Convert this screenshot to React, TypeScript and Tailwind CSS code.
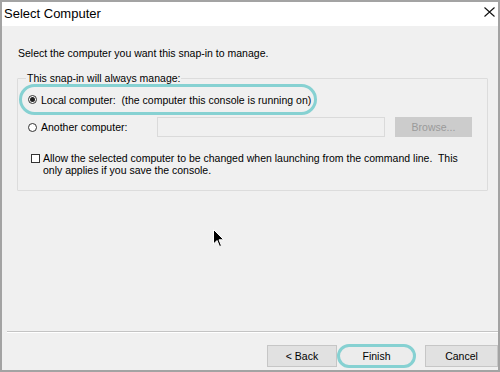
export default function App() {
  return (
    <div className="w-[500px] h-[372px] flex flex-col border-2 border-[#a3a3a3] bg-[#f0f0f0] text-black font-['Liberation_Sans',Arial,sans-serif]">
      {/* Title bar */}
      <div className="h-[24px] shrink-0 bg-white flex items-center justify-between pl-[2px] pr-[2px]">
        <span className="text-[13px] leading-none mt-[-2px]">Select Computer</span>
        <svg width="11" height="10" viewBox="0 0 11 10" className="mt-[-4px] mr-[1px]">
          <path d="M0.5 0.5L10.5 9.5M10.5 0.5L0.5 9.5" stroke="#111" strokeWidth="1.1" />
        </svg>
      </div>

      {/* Body */}
      <div className="relative flex-1 flex flex-col text-[10.5px] leading-[12px]">
        <p className="mt-[21px] ml-[16px]">Select the computer you want this snap-in to manage.</p>

        <fieldset className="mt-[13px] ml-[15px] w-[471px] h-[119px] border border-[#dcdcdc] rounded-[1px]">
          <legend className="ml-[8px] px-[1px]">This snap-in will always manage:</legend>

          <div className="ml-[1px] w-[298px] h-[31px] rounded-full border-[3px] border-[#86d1d2] flex items-center pl-[6px] gap-[4px] whitespace-nowrap">
            <span className="w-[9px] h-[9px] shrink-0 rounded-full border border-[#333] bg-white flex items-center justify-center">
              <span className="w-[5px] h-[5px] rounded-full bg-[#222]" />
            </span>
            <span>Local computer:&nbsp; (the computer this console is running on)</span>
          </div>

          <div className="mt-[2px] flex items-center h-[20px]">
            <div className="ml-[10px] flex items-center gap-[4px] w-[129px]">
              <span className="w-[9px] h-[9px] rounded-full border border-[#333] bg-white" />
              <span>Another computer:</span>
            </div>
            <div className="w-[228px] h-[20px] border border-[#dadada] bg-[#f0f0f0]" />
            <div className="ml-[10px] w-[77px] h-[20px] bg-[#cccccc] text-[#9a9a9a] flex items-center justify-center">
              Browse...
            </div>
          </div>

          <div className="mt-[15px] ml-[13px] flex items-start gap-[3px]">
            <span className="mt-[2px] w-[9px] h-[9px] shrink-0 border border-[#333] bg-white" />
            <span className="whitespace-nowrap">
              Allow the selected computer to be changed when launching from the command line.&nbsp; This
              <br />
              only applies if you save the console.
            </span>
          </div>
        </fieldset>

        {/* Footer */}
        <div className="mt-auto ml-[5px] border-t border-[#c4c4c4] shadow-[0_1px_0_#ffffff]" />
        <div className="mt-[13px] mb-[3px] flex justify-end h-[22px]">
          <button className="w-[70px] h-[22px] bg-[#e1e1e1] border border-[#c6c6c6] text-[10.5px]">&lt; Back</button>
          <button className="w-[79px] h-[24px] mt-[-1px] rounded-full border-[3px] border-[#86d1d2] bg-[#ececec] text-[10.5px]">
            Finish
          </button>
          <button className="ml-[9px] w-[73px] h-[22px] bg-[#e1e1e1] border border-[#c6c6c6] text-[10.5px]">Cancel</button>
        </div>

        {/* Mouse pointer */}
        <svg className="absolute left-[211px] top-[203px]" width="12" height="19" viewBox="0 0 12 19">
          <path d="M0.5 0.5L0.5 15L4 11.5L6.5 17.5L8.5 16.7L6 10.8L10.8 10.8Z" fill="#000" stroke="#fff" strokeWidth="1" />
        </svg>
      </div>
    </div>
  )
}
